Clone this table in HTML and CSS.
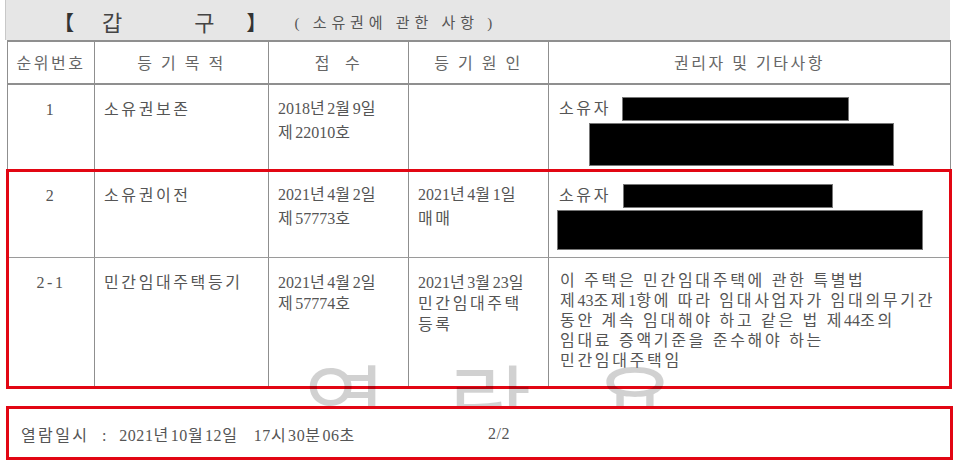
FILE: index.html
```html
<!DOCTYPE html>
<html lang="ko">
<head>
<meta charset="utf-8">
<link rel="stylesheet" href="styles.css">
</head>
<body>
<div class="page">
  <div class="titlebar">
    <span class="bracket">【</span><span class="title-a">갑</span><span class="title-b">구</span><span class="bracket">】</span>
    <span class="subtitle">( 소유권에 관한 사항 )</span>
  </div>

  <div class="table">
    <div class="row head">
      <div class="cell c">순위번호</div>
      <div class="cell c">등 기 목 적</div>
      <div class="cell c">접 &nbsp;수</div>
      <div class="cell c">등 기 원 인</div>
      <div class="cell c">권리자 및 기타사항</div>
    </div>
    <div class="row r1">
      <div class="cell c">1</div>
      <div class="cell">소유권보존</div>
      <div class="cell tall"><span class="n">2018</span>년<span class="n">2</span>월<span class="n">9</span>일<br>제<span class="n">22010</span>호</div>
      <div class="cell"></div>
      <div class="cell owner">
        <div class="owner-line"><span>소유자</span><span class="redact w226"></span></div>
        <span class="redact w304 h42 ml30"></span>
      </div>
    </div>
    <div class="row r2">
      <div class="cell c">2</div>
      <div class="cell">소유권이전</div>
      <div class="cell tall"><span class="n">2021</span>년<span class="n">4</span>월<span class="n">2</span>일<br>제<span class="n">57773</span>호</div>
      <div class="cell tall"><span class="n">2021</span>년<span class="n">4</span>월<span class="n">1</span>일<br>매매</div>
      <div class="cell owner">
        <div class="owner-line"><span>소유자</span><span class="redact w209"></span></div>
        <span class="redact w365 h39 ml-2"></span>
      </div>
    </div>
    <div class="row r3">
      <div class="cell c">2-1</div>
      <div class="cell">민간임대주택등기</div>
      <div class="cell mid"><span class="n">2021</span>년<span class="n">4</span>월<span class="n">2</span>일<br>제<span class="n">57774</span>호</div>
      <div class="cell mid"><span class="n">2021</span>년<span class="n">3</span>월<span class="n">23</span>일<br>민간임대주택<br>등록</div>
      <div class="cell text">이 주택은 민간임대주택에 관한 특별법<br>제<span class="n">43</span>조제<span class="n">1</span>항에 따라 임대사업자가 임대의무기간<br>동안 계속 임대해야 하고 같은 법 제<span class="n">44</span>조의<br>임대료 증액기준을 준수해야 하는<br>민간임대주택임</div>
    </div>
  </div>

  <div class="highlight"></div>
  <div class="watermark"><span>열</span><span>람</span><span>용</span></div>

  <div class="footer">
    <span class="stamp">열람일시 <span class="colon">:</span> <span class="n">2021</span>년<span class="n">10</span>월<span class="n">12</span>일 <span class="time"><span class="n">17</span>시<span class="n">30</span>분<span class="n">06</span>초</span></span>
    <span class="pages">2/2</span>
  </div>
</div>
</body>
</html>
```

FILE: styles.css
```css
* { box-sizing: border-box; }
html, body { margin: 0; padding: 0; background: #fff; }
body {
  font-family: "Liberation Serif", "Noto Sans CJK KR", serif;
  color: #555;
  font-size: 16px;
}
.page {
  position: relative;
  width: 960px;
  height: 465px;
  overflow: hidden;
}
.titlebar {
  margin-left: 5px;
  width: 945px;
  height: 40px;
  background: #e6e6e6;
  border-left: 1px solid #c8c8c8;
  display: flex;
  align-items: center;
  padding-left: 48px;
  padding-top: 2px;
  color: #444;
}
.bracket { font-size: 20px; font-weight: 700; color: #333; }
.title-a { font-size: 22px; margin-left: 28px; }
.title-b { font-size: 22px; margin-left: 72px; margin-right: 32px; }
.subtitle { font-size: 15px; letter-spacing: 4.8px; margin-left: 28px; color: #555; }

.table {
  margin-left: 7px;
  width: 944px;
  border-left: 1px solid #8f8f8f;
  border-top: 2px solid #8f8f8f;
}
.row {
  display: grid;
  grid-template-columns: 87px 174px 140px 140px 402px;
  border-bottom: 1px solid #9a9a9a;
}
.row.head { height: 43px; border-bottom: 2px solid #8f8f8f; }
.row.r1 { height: 86px; }
.row.r2 { height: 87px; }
.row.r3 { height: 129px; }
.cell {
  border-right: 1px solid #8f8f8f;
  padding: 15px 9px 0 9px;
  letter-spacing: 2.6px;
  line-height: 20px;
  white-space: nowrap;
}
.n { letter-spacing: 0; }
.head .cell { padding-top: 12px; color: #666; letter-spacing: 2.5px; }
.cell.c { text-align: center; padding-left: 0; padding-right: 0; }
.cell.tall { line-height: 24px; padding-top: 12px; }
.cell.mid { line-height: 21px; padding-top: 14px; }
.cell.text { letter-spacing: 2.7px; padding-left: 11px; padding-top: 13px; }
.cell.owner { padding: 12px 0 0 10px; }
.owner-line { display: flex; align-items: center; gap: 11px; height: 24px; }
.r2 .owner-line { gap: 12px; }
.redact {
  display: block;
  background: #000;
  border: 1px solid #777;
  height: 24px;
}
.w226 { width: 227px; }
.w209 { width: 210px; }
.w304 { width: 305px; }
.w365 { width: 366px; }
.h42 { height: 43px; }
.h39 { height: 40px; }
.ml30 { margin-left: 30px; margin-top: 2px; }
.ml-2 { margin-left: -2px; margin-top: 2px; }
.r2 .cell.owner { padding-top: 13px; }

.highlight {
  position: absolute;
  left: 6px;
  top: 169px;
  width: 946px;
  height: 220px;
  border: 3px solid #e20613;
  pointer-events: none;
}
.watermark {
  position: absolute;
  left: 304px;
  top: 356px;
  display: flex;
  gap: 62px;
  font-family: "Noto Sans CJK KR", sans-serif;
  font-size: 90px;
  line-height: 1;
  color: rgba(0, 0, 0, 0.18);
  pointer-events: none;
}
.footer {
  position: relative;
  z-index: 2;
  margin: 19px 0 0 6px;
  width: 947px;
  height: 54px;
  background: #fff;
  border: 3px solid #e20613;
  display: flex;
  align-items: center;
  padding-left: 12px;
  padding-top: 2px;
  letter-spacing: 2.4px;
}
.footer .n { letter-spacing: 0.6px; }
.colon { margin: 0 4px 0 6px; }
.time { margin-left: 8px; }
.stamp { width: 467px; }
.pages { letter-spacing: 0.5px; }
```
